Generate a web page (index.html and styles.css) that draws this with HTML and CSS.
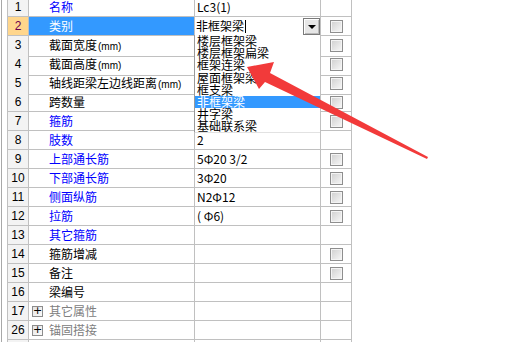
FILE: index.html
```html
<!DOCTYPE html>
<html lang="zh-CN">
<head>
    <meta charset="UTF-8">
    <title>属性编辑</title>
    <link rel="stylesheet" href="styles.css">
</head>
<body>
    <div class="sheet">
        <div class="row"><div class="num">1</div><div class="name blue">名称</div><div class="val">Lc3(1)</div><div class="chk"></div></div>
        <div class="row current">
            <div class="num">2</div>
            <div class="name">类别</div>
            <div class="val combo">
                <span class="combo-text">非框架梁<i class="caret"></i></span>
                <span class="combo-btn"><i class="tri"></i></span>
                <ul class="combo-list">
                    <li>楼层框架梁</li>
                    <li>楼层框架扁梁</li>
                    <li>框架连梁</li>
                    <li>屋面框架梁</li>
                    <li>框支梁</li>
                    <li class="selected">非框架梁</li>
                    <li>井字梁</li>
                    <li>基础联系梁</li>
                </ul>
            </div>
            <div class="chk"><span class="box"></span></div>
        </div>
        <div class="row"><div class="num">3</div><div class="name">截面宽度<span class="unit">(mm)</span></div><div class="val"></div><div class="chk"><span class="box"></span></div></div>
        <div class="row"><div class="num">4</div><div class="name">截面高度<span class="unit">(mm)</span></div><div class="val"></div><div class="chk"><span class="box"></span></div></div>
        <div class="row"><div class="num">5</div><div class="name">轴线距梁左边线距离<span class="unit">(mm)</span></div><div class="val"></div><div class="chk"><span class="box"></span></div></div>
        <div class="row"><div class="num">6</div><div class="name">跨数量</div><div class="val"></div><div class="chk"><span class="box"></span></div></div>
        <div class="row"><div class="num">7</div><div class="name blue">箍筋</div><div class="val"></div><div class="chk"><span class="box"></span></div></div>
        <div class="row"><div class="num">8</div><div class="name blue">肢数</div><div class="val">2</div><div class="chk"></div></div>
        <div class="row"><div class="num">9</div><div class="name blue">上部通长筋</div><div class="val">5Φ20 3/2</div><div class="chk"><span class="box"></span></div></div>
        <div class="row"><div class="num">10</div><div class="name blue">下部通长筋</div><div class="val">3Φ20</div><div class="chk"><span class="box"></span></div></div>
        <div class="row"><div class="num">11</div><div class="name blue">侧面纵筋</div><div class="val">N2Φ12</div><div class="chk"><span class="box"></span></div></div>
        <div class="row"><div class="num">12</div><div class="name blue">拉筋</div><div class="val">( Φ6)</div><div class="chk"><span class="box"></span></div></div>
        <div class="row"><div class="num">13</div><div class="name blue">其它箍筋</div><div class="val"></div><div class="chk"></div></div>
        <div class="row"><div class="num">14</div><div class="name">箍筋增减</div><div class="val"></div><div class="chk"><span class="box"></span></div></div>
        <div class="row"><div class="num">15</div><div class="name">备注</div><div class="val"></div><div class="chk"><span class="box"></span></div></div>
        <div class="row"><div class="num">16</div><div class="name">梁编号</div><div class="val"></div><div class="chk"></div></div>
        <div class="row"><div class="num">17</div><div class="name group"><span class="plus">+</span>其它属性</div><div class="val"></div><div class="chk"></div></div>
        <div class="row"><div class="num">26</div><div class="name group"><span class="plus">+</span>锚固搭接</div><div class="val"></div><div class="chk"></div></div>
        <div class="row"><div class="num"></div><div class="name"></div><div class="val"></div><div class="chk"></div></div>
    </div>

    <svg class="arrow" width="516" height="342" viewBox="0 0 516 342">
        <polygon points="247,67 274,62 270,73 428,157 427,159 265,82 259,89" fill="#f23a3a"/>
    </svg>
</body>
</html>
```

FILE: styles.css
```css
* {
    margin: 0;
    padding: 0;
    box-sizing: border-box;
}

body {
    font-family: "Noto Sans CJK SC", sans-serif;
    font-size: 12px;
    color: #000;
    background: #fff;
    overflow: hidden;
}

.sheet {
    margin: -2px 0 0 1px;
    padding-left: 5px;
    border-left: 1px solid #a8a8a8;
    width: 352px;
}

.row {
    display: grid;
    grid-template-columns: 22px 166px 126px 31px;
    height: 19px;
    line-height: 18px;
}

.row > div {
    border-right: 1px solid #c0c0c0;
    border-bottom: 1px solid #c0c0c0;
    white-space: nowrap;
}

.num {
    border-left: 1px solid #c0c0c0;
    background: #f3f3f3;
    text-align: center;
    font-family: "Liberation Sans", sans-serif;
    font-size: 12px;
}

.name {
    padding-left: 20px;
}

.unit {
    font-family: "Liberation Sans", sans-serif;
    font-size: 10px;
    margin-left: 1px;
}

.blue {
    color: #0000ff;
}

.current .num {
    background: #ffd68c;
    color: #6a0050;
}

.current .name {
    background: #3399ff;
    color: #fff;
}

.val {
    padding-left: 2px;
}

.group {
    padding-left: 3px;
    color: #808080;
    display: flex;
    align-items: center;
}

.plus {
    width: 11px;
    height: 11px;
    margin-right: 6px;
    border: 1px solid #8c8c8c;
    background: linear-gradient(135deg, #e4e4e4, #fbfbfb);
    color: #000;
    font-family: "DejaVu Sans", sans-serif;
    font-size: 11px;
    line-height: 8px;
    text-align: center;
}

/* combo box in the category row */
.combo {
    position: relative;
    display: flex;
    align-items: flex-start;
    justify-content: space-between;
    padding-left: 1px;
}

.combo-text {
    display: flex;
    align-items: center;
    height: 18px;
}

.caret {
    width: 1px;
    height: 13px;
    margin-left: 1px;
    background: #000;
}

.combo-btn {
    width: 17px;
    height: 17px;
    margin-top: 1px;
    border: 1px solid #7a7a7a;
    box-shadow: inset 1px 1px 0 #fff, inset -1px -1px 0 #b8b8b8;
    background: #e6e6e6;
    display: flex;
    align-items: center;
    justify-content: center;
}

.tri {
    width: 0;
    height: 0;
    border-left: 4px solid transparent;
    border-right: 4px solid transparent;
    border-top: 4px solid #000;
}

.combo-list {
    position: absolute;
    top: 18px;
    left: -1px;
    width: 126px;
    height: 98px;
    list-style: none;
    background: #fff;
    border-left: 1px solid #9a9a9a;
    border-bottom: 1px solid #e2e2e2;
    z-index: 2;
}

.combo-list li {
    height: 12.2px;
    line-height: 12.2px;
    padding-left: 2px;
    font-size: 12px;
}

.combo-list .selected {
    background: #3399ff;
    color: #fff;
}

/* check boxes */
.chk {
    padding: 3px 0 0 9px;
}

.box {
    display: block;
    width: 13px;
    height: 13px;
    border: 1px solid #8e8e8e;
    box-shadow: inset 0 0 0 1px #f4f4f4;
    background: linear-gradient(135deg, #cfcfcf, #f8f8f8);
}

.arrow {
    position: absolute;
    top: 0;
    left: 0;
    pointer-events: none;
    z-index: 5;
}
```
